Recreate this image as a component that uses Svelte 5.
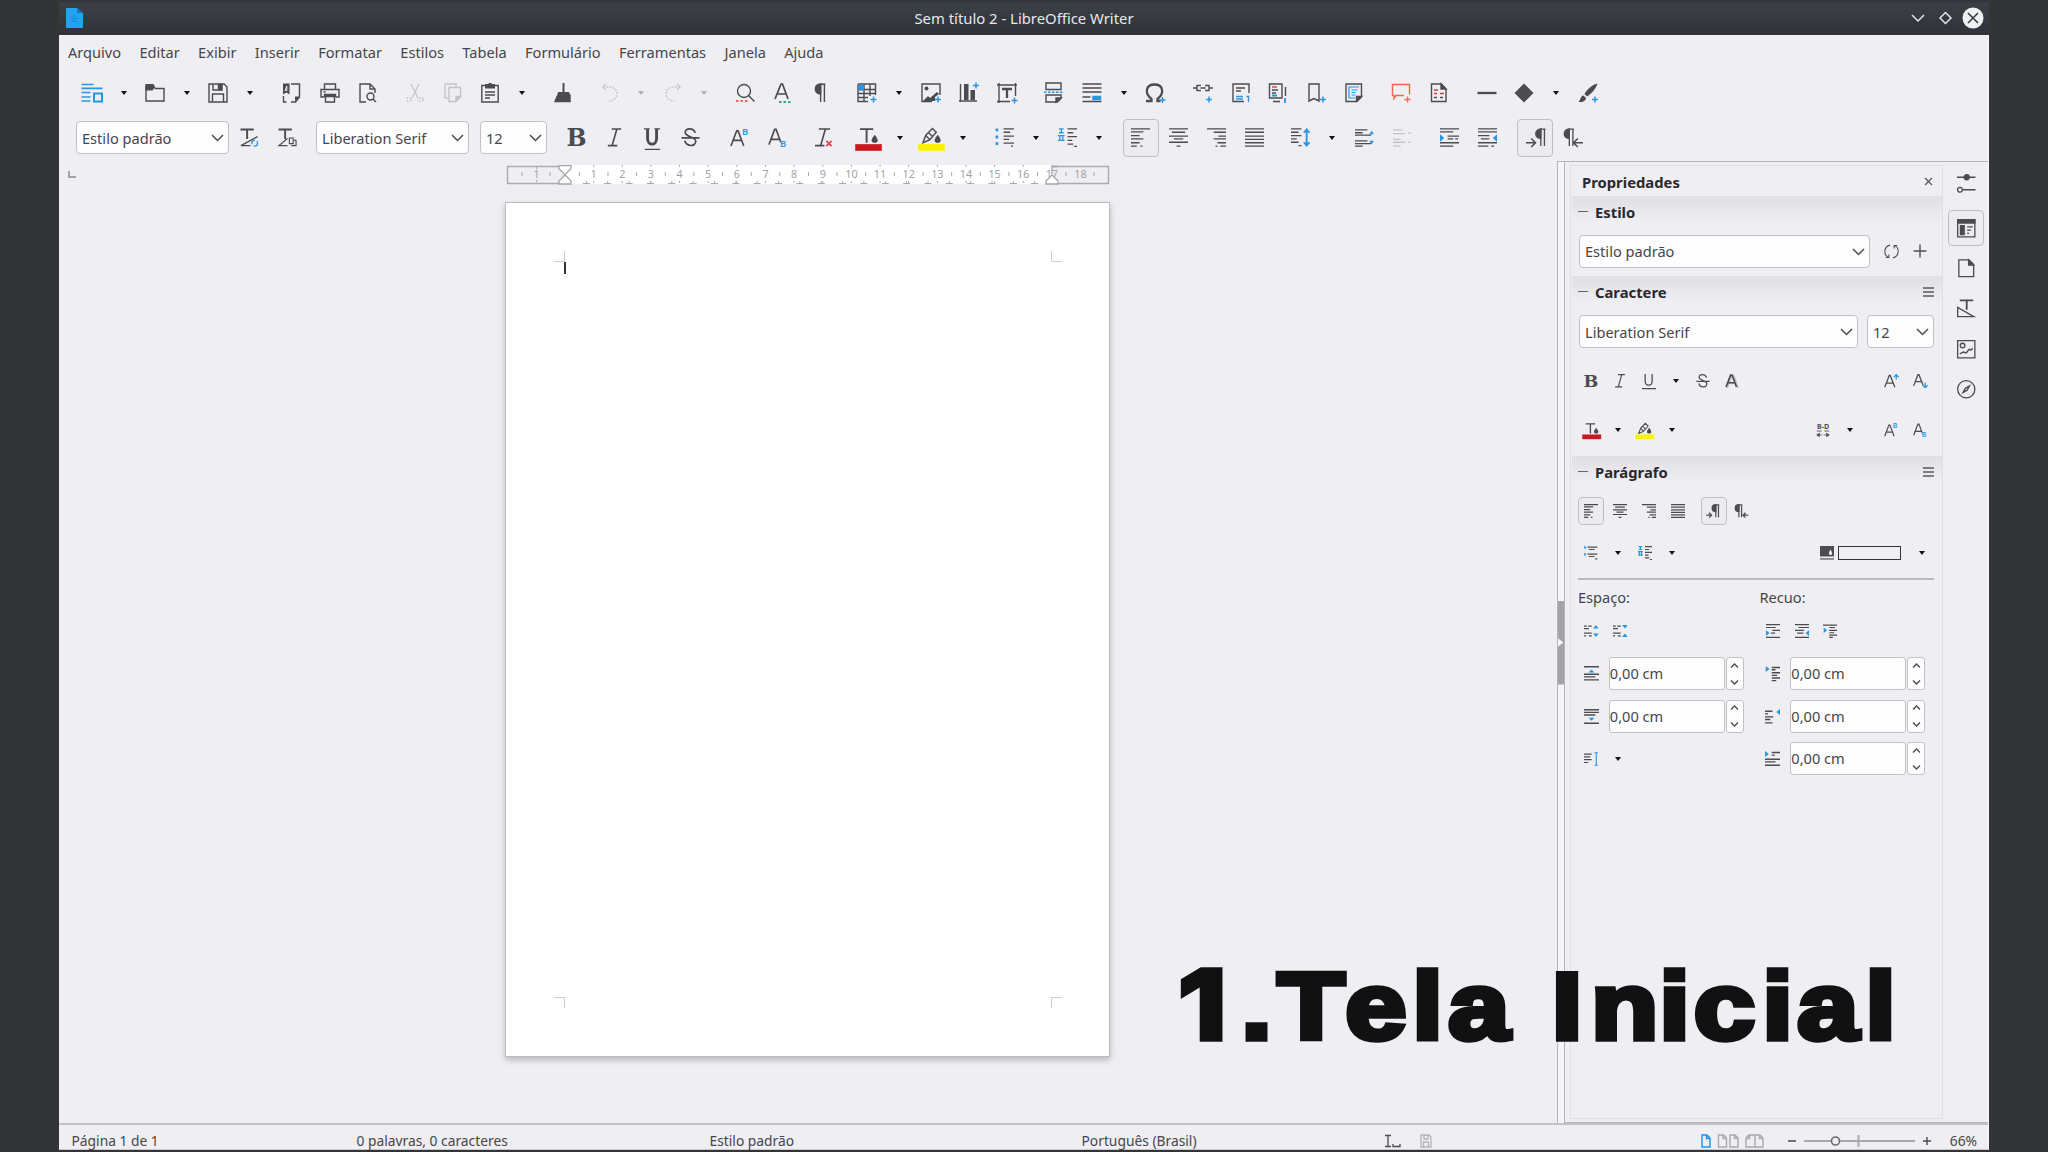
<script>
	const blue = '#2a96e0';
	const dark = '#4c4c50';

	const plus = (x, y, c = blue) => `<path d="M${x - 3} ${y}h6M${x} ${y - 3}v6" stroke="${c}" stroke-width="1.5"/>`;
	const letter = (t, x, y, size, extra = '') =>
		`<text x="${x}" y="${y}" font-size="${size}" stroke="none" fill="${dark}" font-family="Noto Sans, sans-serif" ${extra}>${t}</text>`;
	const serif = 'style="font-family:\'DejaVu Serif\',serif"';
	const pilcrow = '<path d="M9 1.2h5.5M9.6 1v18M13.4 1v18"/><path d="M9.6 1C2.5 1 2.5 11 9.6 11z" fill="#4c4c50"/>';

	const icons = {
		template: `<g stroke="${blue}" stroke-width="1.7"><path d="M-.5 1.5h12M-.5 5.3h21M-.5 9.500h9M-.5 14h9M-.5 18h9"/><path d="M12 10.500h8v8h-8z" stroke-width="2"/></g>`,
		open: '<path d="M1 3v15h18V5.500H10"/><path d="M.4 1h8l2 3.500-3 3H.4z" fill="#4c4c50" stroke="none"/>',
		save: '<path d="M1 1h15l3 3v15H1zM4.500 19v-8h11v8M5 1v6h9V1"/><path d="M10.500 1.500h3v5h-3z" fill="#4c4c50"/>',
		export: '<path d="M9 1h8.500v13l-4 5H9M1.500 13v6h3"/><path d="M1 .500h6.500v11L4.300 9.500 1 11.500zM13 18.500v-5h5z" fill="#4c4c50" stroke="none"/><path d="M4.800 3L3 8M4.800 3v5" stroke="#efeef3" stroke-width="1"/>',
		print: '<path d="M4.500 6V1h11v5M4 14H1V6.500h18V14h-3"/><path d="M4.500 11.500h11v2h-11z" fill="#4c4c50"/><path d="M5.500 13v6h9v-6M3.500 9h2"/>',
		preview: '<path d="M8 19H2V1h10l5 5v4M12 1v5h5"/><circle cx="12.500" cy="13.500" r="3.500"/><path d="M15 16l3 3"/>',
		cut: '<g stroke="#c9c9cf"><path d="M6 1l7 14M14 1L7 15"/><circle cx="4" cy="16.500" r="2.200" stroke-dasharray="2 1.500"/><circle cx="16" cy="16.500" r="2.200" stroke-dasharray="2 1.500"/></g>',
		copy: '<g stroke="#c3c3c9"><path d="M5 15H2V1h11v3M6 4.500h11.500V14l-4.500 4.500H6z"/><path d="M13 18v-4.500h4.500z" fill="#c3c3c9"/></g>',
		paste: '<path d="M6 2.500H1.800V19h16.400V2.500H14M5 9h10M5 12h10M5 15h5"/><path d="M5 1h3l1-1h2l1 1h3v4.500H5z" fill="#4c4c50" stroke="none"/>',
		clone: '<path d="M10.500 0v10" stroke-width="2"/><path d="M5 9h11l2 4H4z" fill="#4c4c50" stroke="none"/><path d="M4 13.500L2 18.500h15V13.500z" fill="#4c4c50"/>',
		undo: '<g stroke="#c6c6cc"><path d="M3 4h7c10 1 9 14-1 14" stroke-dasharray="2 1.200"/><path d="M6 1L3 4l3 3"/></g>',
		redo: '<g stroke="#c6c6cc"><path d="M17 4h-7C0 5 1 18 11 18" stroke-dasharray="2 1.200"/><path d="M14 1l3 3-3 3"/></g>',
		find: '<circle cx="9" cy="8" r="6.500"/><path d="M13.500 12.500l6 6"/><path d="M1 18h13" stroke="#ee6a5b" stroke-width="2" stroke-dasharray="2.500 2"/>',
		spell: '<path d="M2 16L8 1h1.500L15 16M4 11h9.500" stroke-width="1.700"/><path d="M6 19h13" stroke="#36a673" stroke-width="2" stroke-dasharray="2.500 2"/>',
		marks: pilcrow,
		table: `<path d="M1 1h17.500v11M1 1v17.500h10M1 6.500h17.500M1 10.500h17.500M1 14.500h10M7 1v17.500M13 1v12"/><path d="M1.500 1.500H7v6H1.500z" fill="${blue}" stroke="none"/>${plus(16.5, 16.5)}`,
		image: `<path d="M11 18.500H1V1h18v11"/><circle cx="5.500" cy="5.500" r="2" fill="#4c4c50" stroke="none"/><path d="M2 18l5-5 2 2 7-6 2 2-4 3v4z" fill="#4c4c50" stroke="none"/>${plus(17, 16.5)}`,
		chart: `<path d="M1.500 1v18M0 18h18"/><path d="M5 1h4.500v16H5zM11.500 7H16v10h-4.500z" fill="#4c4c50" stroke="none"/>${plus(17, 2.5)}`,
		textbox: `<path d="M0 2h20M2 0v20M18.500 0v13M0 18.500h13"/><path d="M5 6h10M10 6v9" stroke-width="2.300"/>${plus(17.5, 17.5)}`,
		pagebreak: `<path d="M2 0v6.500h15V0zM2 19v-7h15v3.500L13.500 19z"/><path d="M0 9.300h20" stroke="${blue}" stroke-dasharray="2.500 1.500"/><path d="M12 19v-4h5z" fill="#4c4c50"/>`,
		field: `<path d="M.500 1h19M.500 5h19M.500 9h19M.500 14h8M.500 18.500h19"/><path d="M11 13.500h7.500v3H11z" fill="${blue}" stroke="${blue}"/>`,
		omega: `<path d="M1 18h5.500v-2C-1 10 1 1.500 9.500 1.500S20 10 12.500 16v2h3" stroke-width="2.300"/>${plus(17.5, 17)}`,
		link: `<path d="M0 5h4M16 5h4M8 2.500H4v5h4M12 2.500h4v5h-4M7.500 5h5"/>${plus(16, 16.5)}`,
		footnote: `<path d="M13 18.500H2V1h16v9M5 5h9M5 8h5" /><path d="M5 13.500h7M5 16h7M15.500 13.500h2v5.500" stroke="${blue}"/>`,
		endnote: `<path d="M1.500 1H14v14H1.500zM5 18.500h7M17.500 4v9" /><path d="M4 4h5" stroke="#c44"/><path d="M4 7h6M4 10h4"/><path d="M4 12.500h5M17 15v5" stroke="${blue}" stroke-width="1.800"/>`,
		bookmark: `<path d="M3 1h10v17l-5-2.500L3 18z"/>${plus(17, 16.5)}`,
		crossref: `<path d="M2 1h15.500v13L13 18.500H2z"/><path d="M15 4H5v11h6" stroke="${blue}" stroke-width="1.200"/><path d="M7.500 7h6M7.500 9.500h4M7.500 12h4" stroke="${blue}" stroke-width="1.100"/><path d="M12.500 18v-4.500h5z" fill="#4c4c50"/>`,
		comment: '<g stroke="#f0694a"><path d="M13 12.500H5l-2 3v-3H1.500V1.500h17v10"/><path d="M13.500 16.500h6M16.500 13.500v6"/></g>',
		changes: '<path d="M2.500 1h10l4.500 5v12.500h-14.500zM5 14.500h3M11 14.500h3"/><path d="M12 1v5h5z" fill="#4c4c50"/><path d="M5 7h4M5 10.500h3M11 10.500h4" stroke="#c4454d"/>',
		line: '<path d="M.500 10h19" stroke-width="2.300"/>',
		diamond: '<path d="M10 .500L19.500 10 10 19.500.500 10z" fill="#4c4c50" stroke="none"/>',
		brush: `<path d="M19.500 .500C13 2 8 8 6.500 11l2.500 2.500C13 11 18 6 19.500.500zM5.500 12.500C2 13 3 17 .500 18.500 4 20 8 18 8 15z" fill="#4c4c50" stroke="none"/>${plus(17, 16.5)}`,
		styleUpdate: `<path d="M.500 1.500h14M7.500 1.500v10" stroke-width="2"/><path d="M18.500 9L1 18.500h10"/><circle cx="15.500" cy="16" r="3" stroke="${blue}" stroke-dasharray="6 2"/>`,
		styleNew: '<path d="M.500 1.500h14M7.500 1.500v10" stroke-width="2"/><path d="M10 11L1 18.500h9" stroke-width="1.300"/><path d="M12 10.500h4v6h-4zM14 18.500h5v-5.500h-2" stroke-width="1.200"/>',
		bold: letter('B', 10, 19, 25, `text-anchor="middle" font-weight="bold" ${serif}`),
		italic: '<path d="M7 1h10M3 18.500h10M12.500 1l-5 17.500" stroke-width="1.700"/>',
		underline: '<path d="M1 1h6M12 1h6M2 22.500h16" stroke-width="1.400"/><path d="M4.800 1v10c0 8 9.500 8 9.500 0V1" stroke-width="3"/>',
		underlineThin: '<path d="M4.500 0v10c0 8 10 8 10 0V0M0 21h20" stroke-width="1.800"/>',
		strike: '<path d="M15 5C13-.500 4-.500 4.500 5c1 5 11 4 11 9 0 6-9.500 6-11.500-.500M.500 10.500h19" stroke-width="1.800"/>',
		shadow: '<path d="M3 20l6.500-17.500h3L19 20M6 13.500h10" stroke="#c3c3c8" stroke-width="2.600"/><path d="M1.500 18.500L8 1.500h2l6.500 17M4 12.500h10.500" stroke-width="2.400"/>',
		sup: `<path d="M1 19L7 3h1.500L14.500 19M3.500 13h9" stroke-width="1.700"/>${letter('B', 12.5, 7, 10, `font-weight="600" style="fill:${blue}"`)}`,
		sub: `<path d="M1 17.500L7 1.500h1.500L13.500 15M3.500 12h9" stroke-width="1.700"/>${letter('B', 12.5, 20, 10, `font-weight="600" style="fill:${blue}"`)}`,
		clear: '<path d="M5 1h12M1 18.500h10M12 1L7 18.500" stroke-width="1.700"/><path d="M13 13.500l5.500 5.500M18.500 13.500L13 19" stroke="#dc4355" stroke-width="1.900"/>',
		fontcolor: '<path d="M1 1.200h14M8 1.200v14.300" stroke-width="2"/><path d="M16.500 7c5 6 3.500 8.500 0 8.500S11.500 13 16.500 7z" fill="#4c4c50" stroke="none"/><path d="M-4 17h28v7H-4z" fill="#cb1922" stroke="none"/>',
		highlight: '<path d="M1 15.500l3-8 7-7 4 4-7 8zM4 8l4 4M7 5l4 4" stroke-width="1.500"/><path d="M16.500 7c5 6 3.500 8.500 0 8.500S11.500 13 16.500 7z" fill="#4c4c50" stroke="none"/><path d="M-4 17h28v7H-4z" fill="#fbf100" stroke="none"/>',
		bullets: `<path d="M9 1h11M9 4.500h7M9 8.500h11M9 12h6M9 16h11M17 19h2"/><path d="M2 .500v3M2 8v3M2 15v3" stroke="${blue}" stroke-width="2.800"/>`,
		bulletsSmall: `<path d="M5 1.500h14M7 5h8M5 11.500h14M7 15h8M16 18.500h3"/><path d="M1.500 .500v3M1.500 10.500v3" stroke="${blue}" stroke-width="2.600"/>`,
		numbering: `<path d="M10 1h10M10 5h6M10 9h10M10 13h5M10 17h6M17 19.300h3"/><path d="M1 1h5M3.500 1v4M1 5h5M0 8h7M2 8v5M5 8v5M0 13h7" stroke="${blue}"/>`,
		left: '<path d="M0 1h20M0 4h13M0 8h9M0 11.500h13M0 15.500h9M0 19h6M10 19h2"/>',
		center: '<path d="M0 1h20M3 4.500h14M0 8.500h20M5 11.500h10M0 15h20M8 19h4"/>',
		right: '<path d="M0 1h20M7 4.500h13M12 8.500h8M7 11.500h13M11 15.500h9M9 19h2M14 19h6"/>',
		justify: '<path d="M0 1h20M0 4.500h20M0 8.500h20M0 12h20M0 15.500h20M0 19h20"/>',
		linespacing: `<path d="M0 1h11M0 4.500h8M0 8h11M0 11.500h6M0 15h8M8 18.500h3"/><path d="M16.500 2v16M13.500 5l3-3.500 3 3.500M13.500 15l3 3.500 3-3.500" stroke="${blue}" stroke-width="2"/>`,
		paraInc: `<path d="M0 2h13M0 5h8M0 7.500h17M0 13.500h13M0 16.500h17M0 19h8"/><path d="M17.500 3l2.500 3.500h-5zM17.500 17l2.500-3.500h-5z" fill="${blue}" stroke="none"/>`,
		paraDec: '<g stroke="#c3c3c9"><path d="M0 2h10M0 6h13M0 12h8M0 15h13M0 19h8M16 5.500h3M16 15h3"/></g>',
		indentInc: `<path d="M0 1h20M0 4h14M8 8.500h12M8 11.500h6M16 11.500h3M0 15.500h20M0 19h14"/><path d="M0 6.500l4.500 4L0 14.500z" fill="${blue}" stroke="none"/>`,
		indentDec: `<path d="M0 1h20M0 4h20M0 8h12M3 11.500h9M0 15.500h20M0 19h11M14 19h3"/><path d="M20 6.500l-4.500 4L20 14.500z" fill="${blue}" stroke="none"/>`,
		before2: `<path d="M0 1h20M0 5h14M9 9h11M7 13h6M0 19h20"/><path d="M0 9l5 4-5 4z" fill="${blue}" stroke="none"/>`,
		after2: `<path d="M0 1h20M5 5h15M0 9h13M3 13h9M0 19h20"/><path d="M20 9l-5 4 5 4z" fill="${blue}" stroke="none"/>`,
		ltr: `<g transform="translate(6)">${pilcrow}</g><path d="M0 15.500h9.500M5.500 11l4.500 4.500L5.500 20" stroke-width="1.600"/>`,
		rtl: `<g transform="translate(-4)">${pilcrow}</g><path d="M10 15.500h10M14.500 11L10 15.500l4.500 4.500" stroke-width="1.600"/>`,
		ltrSmall: `<g transform="translate(3)">${pilcrow}</g><path d="M-1 16h7M3 12.500L6.500 16 3 19.500" stroke-width="1.800"/>`,
		rtlSmall: `<g transform="translate(-4)">${pilcrow}</g><path d="M12 16h7M15 12.500L11.500 16l3.500 3.500" stroke-width="1.800"/>`,
		grow: `<path d="M1 19L7.500 2h1.500L15.500 19M3.500 13h9.500" stroke-width="1.800"/><path d="M17.500 8V1M14 4.500l3.500-3.500 3.500 3.500" stroke="${blue}" stroke-width="1.800"/>`,
		shrink: `<path d="M1 17L7 1h1.500L14.500 16M3.500 11h9" stroke-width="1.800"/><path d="M17.500 12v7M14 16l3.500 3.500L21 16" stroke="${blue}" stroke-width="1.800"/>`,
		charspace: letter('B-D', 10, 8, 10, 'text-anchor="middle" font-weight="bold"') + '<path d="M1 11.500h7M12 11.500h7" stroke-width="1.200"/><path d="M1 17l4-2.500v5zM9 17h-4M19 17l-4-2.500v5zM11 17h4" fill="#4c4c50" stroke-width="1"/>',
		refresh: '<path d="M8 1.500C-1 3.500-.500 15 5.500 17.500M12 18.500C21 16.500 20.500 5 14.500 2.500M2.500 18h4v-4M17.500 2h-4v4" stroke-width="1.400"/>',
		add: '<path d="M10 2v16M2 10h16" stroke-width="1.700"/>',
		backcolor: '<path d="M0 0h20v15H0z" fill="#4c4c50" stroke="none"/><path d="M0 18.500h20"/><path d="M15 5c4 6 2 8 0 8s-4-2 0-8z" fill="#efeef3" stroke="none"/>',
		spaceInc: `<path d="M0 3h4M6 3h5M0 6.500h7M0 13h11M0 17h3M7 17h4"/><path d="M17 1.500l4 5h-8zM17 18.500l4-5h-8z" fill="${blue}" stroke="none"/>`,
		spaceDec: `<path d="M0 3h4M6 3h5M0 6.500h7M0 13h11M0 17h3M7 17h4"/><path d="M17 6.500l4-5h-8zM17 13.500l4 5h-8z" fill="${blue}" stroke="none"/>`,
		hanging: `<path d="M0 1.500h20M9 5h8M9 9h11M9 12.500h7M9 16h11M9 19h5"/><path d="M1 5l5 4-5 4z" fill="${blue}" stroke="none"/>`,
		above: `<path d="M0 1h20M0 11h20M0 14.500h15M0 18.500h20"/><path d="M10 4.500l4 4H6z" fill="${blue}" stroke="none"/>`,
		below: `<path d="M0 1h20M0 4.500h20M0 8h15M0 19h20"/><path d="M10 15.500l4-4H6z" fill="${blue}" stroke="none"/>`,
		before: `<path d="M9 2h11M9 5h5M9 9h11M9 12.500h7M9 16h11M9 19.500h6"/><path d="M1 0l5 4-5 4z" fill="${blue}" stroke="none"/>`,
		after: `<path d="M0 3h10M0 6.500h4M0 10.500h11M0 14h7M0 18.500h10"/><path d="M20 0l-5 4 5 4z" fill="${blue}" stroke="none"/>`,
		firstline: `<path d="M9 2h11M9 5.500h4M0 11h20M0 14.500h14M0 19h20"/><path d="M0 0l5 4-5 4z" fill="${blue}" stroke="none"/>`,
		lineheight: `<path d="M0 3h11M0 7h9M0 11h11M0 15h6"/><path d="M17.500 1v18M15 1h5M15 19h5" stroke="${blue}" stroke-width="1.600"/>`,
		settings: '<path d="M0 3.500h20M6 17h14" stroke-width="1.600"/><circle cx="10.500" cy="3.500" r="2.700" fill="#4c4c50"/><circle cx="3.200" cy="17" r="2.600"/>',
		properties: '<path d="M.700 .700h18.600v18.600H.700zM11 8.500h6M11 12h4M11 15.500h2"/><path d="M0 0h20v5H0zM3 6.500h5.500v11H3z" fill="#4c4c50" stroke="none"/>',
		page: '<path d="M2 1h11l5 5v13H2z"/><path d="M12.500 1v5.500H18z" fill="#4c4c50"/>',
		styles: '<path d="M3 1.500h14.500M10.500 1.500v10" stroke-width="2"/><path d="M.700 9v10h17.500z"/>',
		gallery: '<path d="M.700 .700h18.600v18.600H.700zM3 15l4-2 3 1 3-4 2 1 2-2"/><circle cx="6" cy="6" r="2.500"/>',
		navigator: '<circle cx="10" cy="10" r="9.300"/><path d="M13.500 6.500l-2.500 4.500-4.500 2.500L9 9z"/>'
	};

	// numbers are separator widths, '-' is a dropdown arrow, '~' a disabled one
	const standard = ['template', '-', 'open', '-', 'save', '-', 11.2, 'export', 'print', 'preview', 9.3, 'cut', 'copy', 'paste', '-', 9.5, 'clone', 9.5, 'undo', '~', 'redo', '~', 9.5, 'find', 'spell', 'marks', 9, 'table', '-', 1, 'image', 'chart', 'textbox', 10, 'pagebreak', 'field', '-', 'omega', 10, 'link', 'footnote', 'endnote', 'bookmark', 'crossref', 10, 'comment', 'changes', 10, 'line', 'diamond', '-', 1, 'brush'];
	const formatting = ['bold', 'italic', 'underline', 'strike', 11, 'sup', 'sub', 8.5, 'clear', 7, 'fontcolor', '-', 'highlight', '-', 9, 'bullets', '-', 'numbering', '-', 10, 'left!', 'center', 'right', 'justify', 7.5, 'linespacing', '-', 1, 'paraInc', 'paraDec', 9, 'indentInc', 'indentDec', 10, 'ltr!', 'rtl'];

	const menus = ['Arquivo', 'Editar', 'Exibir', 'Inserir', 'Formatar', 'Estilos', 'Tabela', 'Formulário', 'Ferramentas', 'Janela', 'Ajuda'];
	const tabs = ['settings', 'properties!', 'page', 'styles', 'gallery', 'navigator'];

	const cm = 28.64;
	const marks = Array.from({ length: 17 }, (_, i) => i + 1);
	const halves = Array.from({ length: 17 * 2 }, (_, i) => i).filter((i) => i % 2);
	const tabStops = Array.from({ length: 22 }, (_, i) => (i + 1) * 21.35);
</script>

{#snippet icon(name, size = 20)}
	<svg class="icon" width={size} height={size} viewBox="0 0 20 20" fill="none" stroke={dark} stroke-width={size < 18 ? 1.7 : 1.4}>
		{@html icons[name]}
	</svg>
{/snippet}

{#snippet chevron(w = 13)}
	<svg class="icon" width={w} height={w} viewBox="0 0 13 13" fill="none" stroke="#4c4c50" stroke-width="1.5"><path d="M1 4l5.500 5.500L12 4" /></svg>
{/snippet}

{#snippet tools(items, size)}
	{#each items as item}
		{#if typeof item === 'number'}
			<span style="width: {item}px"></span>
		{:else if item === '-' || item === '~'}
			<span class="arrow" class:off={item === '~'}></span>
		{:else}
			<span class="tool" class:active={item.endsWith('!')}>{@render icon(item.replace('!', ''), size)}</span>
		{/if}
	{/each}
{/snippet}

{#snippet combo(text, cls)}
	<div class="combo {cls}"><span>{text}</span>{@render chevron()}</div>
{/snippet}

{#snippet header(text, menu)}
	<div class="header">
		<i class="dash"></i><b>{text}</b>
		{#if menu}
			<svg class="burger" width="11" height="10" viewBox="0 0 11 10" stroke="#5a5a5e" stroke-width="1.300"><path d="M0 1h11M0 5h11M0 9h11" /></svg>
		{/if}
	</div>
{/snippet}

{#snippet spin(name)}
	<div class="spinrow">
		<span class="tool">{@render icon(name, 15)}</span>
		<div class="value">0,00 cm</div>
		<div class="steps">
			<svg width="9" height="24" viewBox="0 0 9 24" fill="none" stroke="#4c4c50" stroke-width="1.400"><path d="M1 5.500L4.500 2 8 5.500M1 18.500L4.500 22 8 18.500" /></svg>
		</div>
	</div>
{/snippet}

<div class="desktop">
	<div class="window">
		<div class="titlebar">
			<svg class="appicon" width="17" height="20" viewBox="0 0 17 20"><path d="M0 0h11l6 5v15H0z" fill="#1fa4f0" /><path d="M11 0l6 5h-6z" fill="#0f76b8" /><path d="M5 8h5M5 10.500h7M5 13h5" stroke="#1488d2" /></svg>
			<span>Sem título 2 - LibreOffice Writer</span>
			<div class="controls">
				<svg width="74" height="24" viewBox="0 0 74 24" fill="none" stroke="#e4e5e8" stroke-width="1.500">
					<path d="M2 9l6 6 6-6M35.500 6.500l5.500 5.500-5.500 5.500-5.500-5.500z" />
					<circle cx="63" cy="12" r="10.500" fill="#eff0f1" stroke="none" />
					<path d="M58 7l10 10M68 7l-10 10" stroke="#33373d" />
				</svg>
			</div>
		</div>

		<div class="menubar">
			{#each menus as menu}<span>{menu}</span>{/each}
		</div>

		<div class="toolbar standard">{@render tools(standard, 20)}</div>
		<div class="toolbar format">
			{@render combo('Estilo padrão', 'style')}
			{@render tools(['styleUpdate', 'styleNew'], 19)}
			{@render combo('Liberation Serif', 'font')}
			{@render combo('12', 'size')}
			{@render tools(formatting, 19)}
		</div>

		<div class="main">
			<div class="canvas">
				<svg class="taborigin" width="9" height="8" viewBox="0 0 9 8" fill="none" stroke="#a5a5a9" stroke-width="2"><path d="M1 0v6h7" /></svg>
				<svg class="ruler" width="604" height="22" viewBox="0 0 604 22">
					<path d="M1.500 1.500h601v17H1.500z" fill="#efeef3" stroke="#adadb1" stroke-width="1.500" />
					<path d="M59 0h487v19.500H59z" fill="#fff" />
					<g stroke="#aaaaad">
						<path d="M16 7v4M44 7v4M30.500 2v2M30.500 15v2M560 7v4M588 7v4" />
						{#each halves as h}<path d="M{59 + (h * cm) / 2} 7v4" />{/each}
						{#each marks as m}<path d="M{59 + m * cm} 0v2M{59 + m * cm} 16v2" />{/each}
						{#each tabStops as t}<path d="M{59 + t} 16v3M{55.500 + t} 18.500h7" />{/each}
					</g>
					<g class="numbers">
						<text x="30.500" y="13">1</text>
						{#each [...marks, 18] as m}<text x={59 + m * cm} y="13">{m}</text>{/each}
					</g>
					<g fill="#fff" stroke="#a5a5a9" stroke-width="1.300">
						<path d="M53 .700h12v3l-6 6-6-6zM53 19h12v-3l-6-6-6 6zM540 19h12v-3l-6-6-6 6z" />
						<path d="M546 9V1.500h5" fill="none" />
					</g>
				</svg>
				<div class="page">
					<i class="corner tl"></i><i class="corner tr"></i><i class="corner bl"></i><i class="corner br"></i>
					<i class="caret"></i>
				</div>
			</div>

			<div class="splitter"><div class="grip"></div></div>

			<div class="sidebar">
				<div class="panel">
					<div class="paneltitle">
						<b>Propriedades</b>
						<svg width="9" height="9" viewBox="0 0 9 9" stroke="#55555a" stroke-width="1.200"><path d="M1 1l7 7M8 1L1 8" /></svg>
					</div>

					{@render header('Estilo')}
					<div class="body estilo">
						{@render combo('Estilo padrão', 'wide')}
						<span class="tool gapped">{@render icon('refresh', 15)}</span>
						<span class="tool">{@render icon('add', 16)}</span>
					</div>

					{@render header('Caractere', true)}
					<div class="body caractere">
						<div class="row">
							{@render combo('Liberation Serif', 'name')}
							{@render combo('12', 'small')}
						</div>
						<div class="row tools">
							{@render tools(['bold', 'italic', 'underlineThin', '-', 'strike', 'shadow'], 14)}
							<span class="push"></span>
							{@render tools(['grow', 'shrink'], 14)}
						</div>
						<div class="row tools">
							{@render tools(['fontcolor', '-', 'highlight', '-'], 13.500)}
							<span class="push"></span>
							{@render tools(['charspace', '-', 14, 'sup', 'sub'], 14)}
						</div>
					</div>

					{@render header('Parágrafo', true)}
					<div class="body paragrafo">
						<div class="row tools">{@render tools(['left!', 'center', 'right', 'justify', 7, 'ltrSmall!', 'rtlSmall'], 14)}</div>
						<div class="row tools second">
							{@render tools(['bulletsSmall', '-', 'numbering', '-'], 14)}
							<span class="push"></span>
							{@render icon('backcolor', 14)}
							<span class="swatch"></span>
							{@render tools(['-'], 14)}
						</div>
						<div class="rule"></div>
						<div class="columns">
							<div>
								<div class="label">Espaço:</div>
								<div class="row quick">{@render tools(['spaceInc', 'spaceDec'], 14)}</div>
								{@render spin('above')}
								{@render spin('below')}
								<div class="spinrow">{@render tools(['lineheight', '-'], 14)}</div>
							</div>
							<div>
								<div class="label">Recuo:</div>
								<div class="row quick">{@render tools(['before2', 'after2', 'hanging'], 14)}</div>
								{@render spin('before')}
								{@render spin('after')}
								{@render spin('firstline')}
							</div>
						</div>
					</div>
				</div>

				<div class="tabbar">
					{#each tabs as tab}
						<span class="tab" class:active={tab.endsWith('!')}>{@render icon(tab.replace('!', ''), 18.500)}</span>
					{/each}
				</div>
			</div>
		</div>

		<div class="statusbar">
			<span class="pages">Página 1 de 1</span>
			<span class="words">0 palavras, 0 caracteres</span>
			<span class="pagestyle">Estilo padrão</span>
			<span class="lang">Português (Brasil)</span>
			<svg class="mode" width="50" height="14" viewBox="0 0 50 14" fill="none" stroke="#4c4c50" stroke-width="1.300">
				<path d="M0 1.500h6M3 1.500v11M0 12.500h6M8 10v2.500h7V10" />
				<path d="M36 1h8l2 2v10H36zM38.500 13V8h5v5M39 1v4h4V1" stroke="#b4b4b8" />
			</svg>
			<svg class="views" width="64" height="14" viewBox="0 0 64 14" fill="none" stroke="#a9a9ae" stroke-width="1.400">
				<path d="M1 1h5l3 3v9H1zM5.500 1v3.500H9" stroke="#1d93ea" />
				<path d="M17.500 1h5l3 3v9h-8zM22 1v3.500h3.500M29 1h5l3 3v9h-8zM33.500 1v3.500H37M54 13h-9V4l3-3h6zM54 13h8V4l-3-3h-5zM48.500 1v3.500H45M58.500 1v3.500H62" />
			</svg>
			<svg class="zoom" width="144" height="16" viewBox="0 0 144 16" fill="none" stroke="#4c4c50" stroke-width="1.400">
				<path d="M1 8h8M136 8h8M140 4v8" />
				<path d="M17 8h111M71.500 2v12" stroke="#a9a9ad" stroke-width="2" />
				<circle cx="48.500" cy="8" r="4" fill="#efeef3" stroke="#6b6b70" stroke-width="1.600" />
			</svg>
			<span>66%</span>
		</div>
	</div>

	<svg class="caption" width="760" height="110" viewBox="0 0 760 110">
		<text
			transform="scale(1.16 1)"
			y="79.300"
			x="6 59.700 90.900 149.300 207.200 238.100 295 327.300 361.200 420.100 449.800 508.900 539 597.700"
		><tspan class="digit">1</tspan>.Tela Inicial</text>
	</svg>
</div>

<style>
	:global(body) {
		background: #333435;
		overflow: hidden;
	}

	.desktop {
		position: relative;
		width: 2048px;
		height: 1152px;
		background: #333435;
		font-family: 'Noto Sans', sans-serif;
		font-size: 14.6px;
		color: #46464a;
	}

	.desktop :global(*) {
		box-sizing: border-box;
	}

	.window {
		display: flex;
		flex-direction: column;
		width: 1930px;
		height: 1150px;
		margin-left: 59px;
		background: #efeef3;
		border-right: 1px solid #fafafa;
		border-bottom: 1px solid #c8c8cc;
	}

	.icon {
		overflow: visible;
		flex: none;
	}

	.titlebar {
		display: flex;
		align-items: center;
		justify-content: space-between;
		height: 35px;
		flex: none;
		margin-right: -1px;
		padding: 1px 5px 0 7px;
		background: linear-gradient(#303439, #3b3f46 12%, #2f3238);
		color: #e6e7e9;
		font-size: 14.85px;
	}

	.titlebar span {
		margin-left: 55px;
	}

	.controls {
		display: flex;
	}

	.menubar {
		display: flex;
		gap: 18.35px;
		height: 36px;
		flex: none;
		padding-left: 9px;
		line-height: 35px;
	}

	.toolbar {
		display: flex;
		align-items: center;
		flex: none;
	}

	.standard {
		height: 43px;
		padding-left: 14.5px;
	}

	.format {
		height: 47px;
		padding-left: 17px;
	}

	.tool {
		display: flex;
		align-items: center;
		justify-content: center;
		flex: none;
		width: 37.7px;
		height: 38px;
		border: 1px solid transparent;
		border-radius: 4px;
	}

	.format .tool {
		width: 38px;
	}

	.format .tool.active {
		width: 36px;
		margin: 0 1px;
	}

	.tool.active,
	.tab.active {
		border-color: #bfbfc3;
		background: #ececef;
	}

	.arrow {
		display: flex;
		justify-content: center;
		width: 25.3px;
		flex: none;
	}

	.arrow::before {
		content: '';
		border: 3.5px solid transparent;
		border-top: 4px solid #111;
		border-bottom: 0;
	}

	.arrow.off::before {
		border-top-color: #b0b0b5;
	}

	.combo {
		display: flex;
		align-items: center;
		justify-content: space-between;
		flex: none;
		height: 33px;
		padding: 0 4px 0 5px;
		background: #fdfdfe;
		border: 1.5px solid #c2c2c6;
		border-radius: 4px;
	}

	.style {
		width: 153px;
		margin-right: 1px;
	}

	.font {
		width: 153px;
		margin: 0 11px 0 10px;
	}

	.size {
		width: 67px;
		margin-right: 10px;
	}

	.main {
		display: flex;
		height: 964px;
		flex: none;
		border-bottom: 2px solid #c2c2c5;
	}

	.canvas {
		position: relative;
		width: 1498px;
		padding: 4px 0 0 446px;
	}

	.taborigin {
		position: absolute;
		left: 9px;
		top: 10px;
	}

	.ruler {
		display: block;
		margin-left: 1px;
	}

	.numbers {
		font-size: 10.8px;
		fill: #a2a2a6;
		text-anchor: middle;
	}

	.page {
		position: relative;
		width: 605px;
		height: 855px;
		margin-top: 15px;
		background: #fff;
		border: 1px solid #bcbcc0;
		box-shadow: 0 3px 6px #b8b8bd;
	}

	.corner {
		position: absolute;
		width: 11px;
		height: 11px;
		border: 0 solid #cdcdd0;
	}

	.tl {
		left: 48px;
		top: 48px;
		border-width: 0 1.5px 1.5px 0;
	}

	.tr {
		left: 545px;
		top: 48px;
		border-width: 0 0 1.5px 1.5px;
	}

	.bl {
		left: 48px;
		top: 794px;
		border-width: 1.5px 1.5px 0 0;
	}

	.br {
		left: 545px;
		top: 794px;
		border-width: 1.5px 0 0 1.5px;
	}

	.caret {
		position: absolute;
		left: 58px;
		top: 59px;
		width: 1.5px;
		height: 12px;
		background: #333;
	}

	.splitter {
		display: flex;
		align-items: center;
		width: 8px;
		background: #f6f6f9;
		border: 1px solid #b5b5b9;
		border-bottom: 0;
	}

	.grip {
		width: 6px;
		height: 84px;
		background: #a3a3a8;
		clip-path: polygon(0 0, 100% 0, 100% 100%, 0 100%, 0 55%, 90% 50%, 0 45%);
	}

	.sidebar {
		display: flex;
		flex: 1;
		padding-left: 5px;
		border-top: 1px solid #b5b5b9;
		border-bottom: 1px solid #b5b5b9;
	}

	.panel {
		width: 373px;
		margin: 3px 0 3px;
		border: 1px solid #dedee3;
		padding-left: 1px;
	}

	b {
		color: #29292d;
		font-size: 14.8px;
	}

	.paneltitle {
		display: flex;
		align-items: center;
		justify-content: space-between;
		height: 30px;
		padding: 1px 9px 0 10px;
	}

	.header {
		display: flex;
		align-items: center;
		height: 27px;
		padding: 4px 8px 0 6px;
		background: linear-gradient(#dfdfe4, #efeef3);
	}

	.dash {
		width: 10px;
		height: 1.5px;
		margin-right: 7px;
		background: #66666a;
	}

	.burger {
		margin-left: auto;
	}

	.body {
		padding: 0 8px 0 5px;
	}

	.body .tool {
		width: 28.8px;
		height: 28px;
	}

	.body .tool.active {
		width: 26px;
		margin: 0 1.4px;
	}

	.body .arrow {
		width: 25px;
	}

	.row {
		display: flex;
		align-items: center;
	}

	.push {
		flex: 1;
	}

	.estilo {
		display: flex;
		align-items: center;
		height: 53px;
		padding-top: 3px;
	}

	.wide {
		width: 291px;
		margin-left: 2px;
	}

	.estilo .tool.gapped {
		margin-left: 7px;
	}

	.caractere {
		height: 153px;
		padding-top: 12px;
	}

	.name {
		width: 279px;
		margin: 0 9px 0 2px;
	}

	.small {
		width: 67px;
	}

	.caractere .tools {
		height: 49px;
	}

	.caractere .tools:nth-child(2) {
		margin-top: 8px;
	}

	.paragrafo .row {
		height: 28px;
		margin-top: 14px;
	}

	.paragrafo .second {
		height: 30px;
		margin-top: 13px;
	}

	.swatch {
		width: 63px;
		height: 14px;
		margin: 0 8px 0 4px;
		border: 1.5px solid #333338;
	}

	.rule {
		height: 2px;
		margin: 10px 0 0 1px;
		background: #bbbbbf;
	}

	.columns {
		display: flex;
	}

	.columns > div {
		flex: none;
		width: 181.5px;
	}

	.label {
		height: 37px;
		padding-left: 1px;
		line-height: 34px;
	}

	.paragrafo .quick {
		margin: 0 0 12px;
	}

	.spinrow {
		display: flex;
		align-items: center;
		height: 33px;
		margin-bottom: 9.5px;
	}

	.value,
	.steps {
		height: 33px;
		background: #fdfdfe;
		border: 1.5px solid #c2c2c6;
		border-radius: 3px;
		line-height: 30px;
	}

	.value {
		width: 116px;
		margin-left: 3px;
	}

	.steps {
		display: flex;
		align-items: center;
		justify-content: center;
		width: 18px;
		margin-left: 1px;
	}

	.tabbar {
		display: flex;
		flex-direction: column;
		align-items: center;
		flex: 1;
		padding: 3px 0 0 1px;
	}

	.tab {
		display: flex;
		align-items: center;
		justify-content: center;
		width: 36px;
		height: 36px;
		margin-bottom: 4.3px;
		border: 1px solid transparent;
		border-radius: 4px;
	}

	.tab:first-child {
		margin-bottom: 9px;
	}

	.statusbar {
		display: flex;
		align-items: center;
		flex: 1;
		padding: 6px 11px 0 12.5px;
		font-size: 13.8px;
	}

	.pages {
		width: 285px;
	}

	.words {
		width: 353px;
	}

	.pagestyle {
		width: 372px;
	}

	.lang {
		width: 303px;
	}

	.views {
		margin-left: auto;
		margin-right: 22px;
	}

	.zoom {
		margin-right: 19px;
	}

	.caption {
		position: absolute;
		left: 1172px;
		top: 960px;
		overflow: visible;
		font-family: 'Liberation Sans', sans-serif;
		font-size: 95px;
		font-weight: bold;
		fill: #111112;
		stroke: #111112;
		stroke-width: 5.5px;
		stroke-miterlimit: 3;
	}

	.digit {
		font-family: Inter, sans-serif;
	}
</style>
